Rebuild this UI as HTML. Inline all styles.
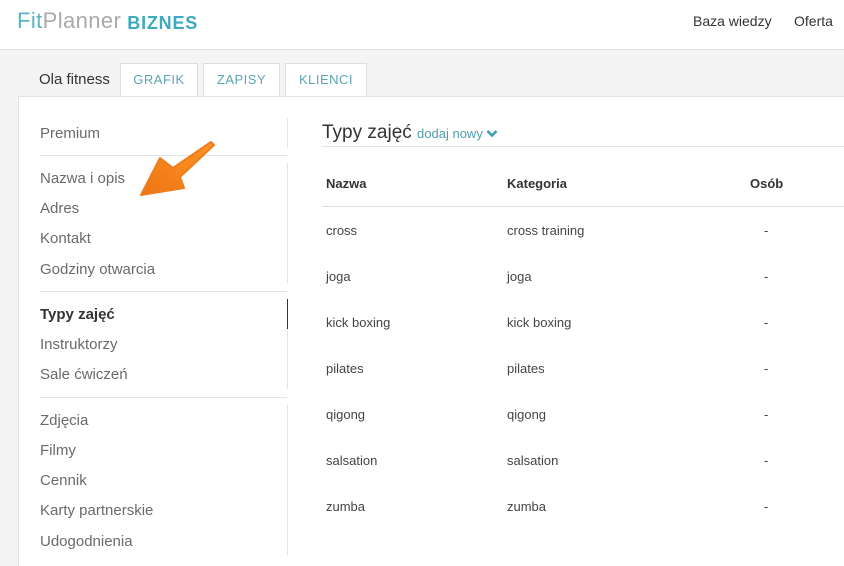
<!DOCTYPE html>
<html><head><meta charset="utf-8"><style>
*{margin:0;padding:0;box-sizing:border-box}
html,body{width:844px;height:566px;overflow:hidden}
body{background:#f4f4f4;font-family:"Liberation Sans",sans-serif;position:relative}
.hdr{position:absolute;left:0;top:0;width:844px;height:50px;background:#fff;border-bottom:1px solid #e2e2e2}
.logo{position:absolute;left:17px;top:8px;font-size:22px;line-height:26px;letter-spacing:0.4px;white-space:nowrap}
.logo .a{color:#5ab4c5}.logo .b{color:#aaa}.logo .c{color:#3fa9bd;font-weight:bold;font-size:18px;margin-left:6px;letter-spacing:0.8px;position:relative;top:1px}
.nav{position:absolute;top:13px;font-size:14px;color:#333}
.t{position:absolute;font-size:14px}
.tab{position:absolute;top:63px;height:34px;background:#fff;border:1px solid #ddd;border-bottom:none;color:#5aa6b5;font-size:13px;text-align:center;line-height:31px;letter-spacing:0.5px}
.panel{position:absolute;left:18px;top:96px;width:830px;height:480px;background:#fff;border:1px solid #e2e2e2;border-bottom:none}
.m{position:absolute;left:40px;font-size:15px;color:#6a6a6a}
.hl{position:absolute;left:40px;width:247px;height:1px;background:#e4e4e4}
.vl{position:absolute;left:287px;width:1px;background:#e4e4e4}
.c{position:absolute;font-size:13px;color:#444}
.th{position:absolute;font-size:13px;color:#333;font-weight:bold}
</style></head><body>
<div class="hdr">
<div class="logo"><span class="a">Fit</span><span class="b">Planner</span><span class="c">BIZNES</span></div>
<div class="nav" style="left:693px">Baza wiedzy</div>
<div class="nav" style="left:794px">Oferta</div>
</div>
<div class="t" style="left:39px;top:71px;font-size:15px;color:#333">Ola fitness</div>
<div class="tab" style="left:120px;width:78px">GRAFIK</div>
<div class="tab" style="left:203px;width:77px">ZAPISY</div>
<div class="tab" style="left:285px;width:82px">KLIENCI</div>
<div class="panel"></div>
<div class="m" style="top:125px">Premium</div>
<div class="vl" style="top:118px;height:30px"></div>
<div class="hl" style="top:155px"></div>
<div class="vl" style="top:163px;height:120px"></div>
<div class="m" style="top:170px">Nazwa i opis</div>
<div class="m" style="top:200px">Adres</div>
<div class="m" style="top:230px">Kontakt</div>
<div class="m" style="top:261px">Godziny otwarcia</div>
<div class="hl" style="top:291px"></div>
<div class="vl" style="top:299px;height:30px;background:#333"></div>
<div class="vl" style="top:329px;height:60px"></div>
<div class="m" style="top:306px;color:#333;font-weight:bold">Typy zajęć</div>
<div class="m" style="top:336px">Instruktorzy</div>
<div class="m" style="top:366px">Sale ćwiczeń</div>
<div class="hl" style="top:397px"></div>
<div class="vl" style="top:405px;height:150px"></div>
<div class="m" style="top:412px">Zdjęcia</div>
<div class="m" style="top:442px">Filmy</div>
<div class="m" style="top:472px">Cennik</div>
<div class="m" style="top:502px">Karty partnerskie</div>
<div class="m" style="top:533px">Udogodnienia</div>
<svg style="position:absolute;left:0;top:0" width="844" height="566" viewBox="0 0 844 566">
<defs><linearGradient id="g" x1="0" y1="1" x2="1" y2="0"><stop offset="0" stop-color="#ee7414"/><stop offset="1" stop-color="#ff9526"/></linearGradient></defs>
<polygon points="141,195 160,158 173,168 211,142 214,145 180,177 184,188" fill="url(#g)" stroke="#ee7d1c" stroke-width="2" stroke-linejoin="round"/>
</svg>
<div class="t" style="left:322px;top:122px;font-size:19px;color:#333">Typy zajęć <span style="font-size:13px;color:#4d9fb0">dodaj nowy</span><svg width="12" height="9" viewBox="0 0 12 9" style="margin-left:3px"><path d="M1.5 2 L6 6.5 L10.5 2" fill="none" stroke="#3f9fb2" stroke-width="2.6"/></svg></div>
<div style="position:absolute;left:322px;top:146px;width:522px;height:1px;background:#e4e4e4"></div>
<div class="th" style="left:326px;top:176px">Nazwa</div>
<div class="th" style="left:507px;top:176px">Kategoria</div>
<div class="th" style="left:750px;top:176px">Osób</div>
<div style="position:absolute;left:322px;top:206px;width:522px;height:1px;background:#ddd"></div>
<div class="c" style="left:326px;top:223px">cross</div><div class="c" style="left:507px;top:223px">cross training</div><div class="c" style="left:764px;top:223px">-</div>
<div class="c" style="left:326px;top:269px">joga</div><div class="c" style="left:507px;top:269px">joga</div><div class="c" style="left:764px;top:269px">-</div>
<div class="c" style="left:326px;top:315px">kick boxing</div><div class="c" style="left:507px;top:315px">kick boxing</div><div class="c" style="left:764px;top:315px">-</div>
<div class="c" style="left:326px;top:361px">pilates</div><div class="c" style="left:507px;top:361px">pilates</div><div class="c" style="left:764px;top:361px">-</div>
<div class="c" style="left:326px;top:407px">qigong</div><div class="c" style="left:507px;top:407px">qigong</div><div class="c" style="left:764px;top:407px">-</div>
<div class="c" style="left:326px;top:453px">salsation</div><div class="c" style="left:507px;top:453px">salsation</div><div class="c" style="left:764px;top:453px">-</div>
<div class="c" style="left:326px;top:499px">zumba</div><div class="c" style="left:507px;top:499px">zumba</div><div class="c" style="left:764px;top:499px">-</div>
</body></html>
